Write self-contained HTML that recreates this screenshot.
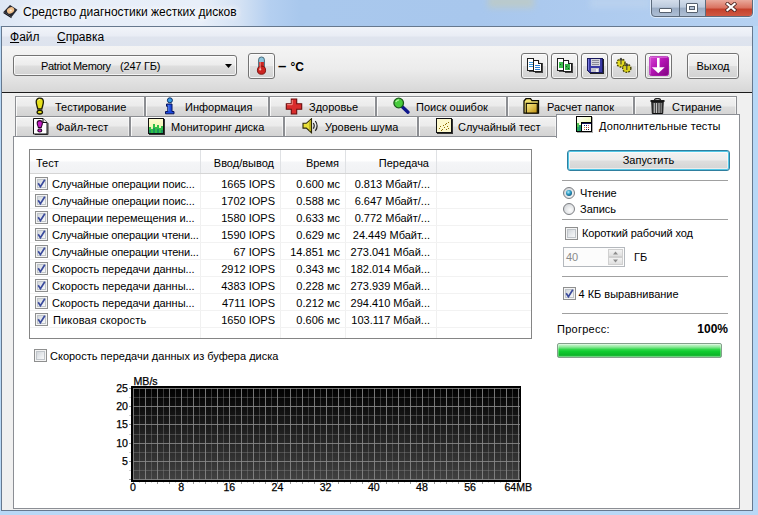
<!DOCTYPE html>
<html lang="ru"><head><meta charset="utf-8"><title>Средство диагностики жестких дисков</title>
<style>
*{box-sizing:border-box;margin:0;padding:0}
html,body{width:758px;height:515px;overflow:hidden}
body{position:relative;font-family:"Liberation Sans","DejaVu Sans",sans-serif;font-size:11px;color:#000;background:#b8d8f6}
.abs{position:absolute}
#titlebar{position:absolute;left:0;top:0;width:758px;height:26px;background:linear-gradient(90deg,#dde7f5 0,#e6edf8 40px,#e8eff9 200px,#d4e2f4 240px,#b4cff0 270px,#a9c8ed 300px,#a8c7ed 480px,#aecbef 600px,#b6d2f2 758px)}
#titlebar .blob{position:absolute;filter:blur(3px)}
#title{position:absolute;left:23px;top:4px;font-size:12px;line-height:16px;white-space:nowrap;text-shadow:0 0 6px #fff,0 0 6px #fff,0 0 9px #fff}
#client{position:absolute;left:1px;top:26px;width:752px;height:485px;border:1px solid #66788e;background:#f0f0f0}
#menubar{position:absolute;left:2px;top:27px;width:750px;height:19px;background:linear-gradient(#f1f4f9 0,#e9edf5 45%,#dfe4ee 55%,#dde3ee 100%)}
.menu{position:absolute;top:29px;font-size:12px;line-height:16px}
.menu u{text-decoration:underline}
#toolbar{position:absolute;left:2px;top:46px;width:750px;height:46px;background:linear-gradient(#f4f4f4 0,#ececec 50%,#d7d7d7 100%)}
#tbline{position:absolute;left:2px;top:92px;width:750px;height:1px;background:#1c1c1c}
.btn{position:absolute;border:1px solid #737373;border-radius:3px;background:linear-gradient(#f4f4f4 0,#ececec 48%,#dedede 52%,#d2d2d2 100%);box-shadow:inset 0 0 0 1px rgba(255,255,255,.75)}
.tab{position:absolute;height:20px;border:1px solid #8c8e92;border-bottom:none;background:linear-gradient(#f2f2f2 0,#ebebeb 48%,#dddddd 52%,#d3d3d3 100%);box-shadow:inset 1px 1px 0 rgba(255,255,255,.8),inset -1px 0 0 rgba(255,255,255,.5);white-space:nowrap;line-height:18px}
.tab span{position:absolute;top:1px}
.tab svg{position:absolute}
#pane{position:absolute;left:13px;top:136px;width:727px;height:373px;border:1px solid #8b8e94;background:#fff}
#seltab{position:absolute;left:556px;top:114px;width:184px;height:24px;border:1px solid #8b8e94;border-bottom:none;background:#fff}
#list{position:absolute;left:29px;top:149px;width:503px;height:190px;border:1px solid #858585;background:#fff;overflow:hidden}
#lhead{position:absolute;left:0;top:0;width:501px;height:24px;background:linear-gradient(#fff 0,#fff 45%,#f4f5f7 55%,#f1f2f4 100%);border-bottom:1px solid #d5d5d5}
.hc{position:absolute;top:0;height:23px;line-height:27px;border-right:1px solid #dfe1e4}
.row{position:absolute;left:0;height:17px;width:500px;line-height:19px;white-space:nowrap}
.row .ck{position:absolute;left:5px;top:2px}
.row span{position:absolute;top:0}
.c1{left:22px}.c2{right:255px}.c3{right:190px}.c4{right:100px}
.vl{position:absolute;top:24px;width:1px;height:166px;background:#f0f0f0}.hl{position:absolute;left:0;width:501px;height:1px;background:#f2f2f2}
.ck{position:absolute}
.lbl{position:absolute;white-space:nowrap;line-height:14px}
.sep{position:absolute;left:562px;width:166px;height:1px;background:#a0a0a0}
.radio{position:absolute;width:12px;height:12px;border-radius:50%;border:1px solid #7c7e82;background:radial-gradient(circle at 62% 62%,#fdfdfd 0,#e6e8ea 45%,#c4c8cc 100%)}
.yl{position:absolute;left:100px;width:28px;text-align:right;font-size:10.6px;line-height:14px;-webkit-text-stroke:.25px #000;font-family:"Liberation Sans",sans-serif}
.xl{position:absolute;top:480px;width:30px;text-align:center;font-size:10.6px;line-height:14px;white-space:nowrap;-webkit-text-stroke:.25px #000}
#chart{position:absolute;left:129px;top:386px}
</style></head><body>
<div id="titlebar">
 <div class="blob" style="left:488px;top:-4px;width:46px;height:12px;background:#c9ccb0;opacity:.55"></div>
 <div class="blob" style="left:590px;top:-2px;width:60px;height:10px;background:#bdd3ee;opacity:.8"></div>
</div>
<svg class="abs" style="left:3px;top:4px" width="15" height="15" viewBox="0 0 15 15"><path d="M.6 7.800 L7 1 L14.400 5.800 L8.600 13 Z" fill="#262830"/><path d="M.6 7.800 L8.600 13 L8.400 14.200 L.5 9.200Z" fill="#14151c"/><ellipse cx="7.600" cy="6.400" rx="3.800" ry="2.900" transform="rotate(-28 7.600 6.400)" fill="#f0c08c"/><circle cx="7.700" cy="6.500" r="1.100" fill="#fff0dc"/></svg>
<div id="title">Средство диагностики жестких дисков</div>
<!-- caption buttons -->
<div class="abs" style="left:651px;top:-1px;width:102px;height:18px;border:1px solid #5d6b7c;border-radius:0 0 4px 4px;background:linear-gradient(#d3ddeb 0,#bccadd 45%,#9aacc4 50%,#aebfd5 100%);overflow:hidden;box-shadow:0 0 0 1px rgba(255,255,255,.55)">
  <div class="abs" style="left:27px;top:0;width:1px;height:18px;background:#5d6b7c"></div>
  <div class="abs" style="left:53px;top:0;width:1px;height:18px;background:#5d6b7c"></div>
  <div class="abs" style="left:54px;top:0;width:48px;height:18px;background:linear-gradient(#e9a99c 0,#d9705e 45%,#c4402b 50%,#d2604a 100%)"></div>
  <div class="abs" style="left:7px;top:8px;width:13px;height:5px;background:#fff;border:1px solid #56606e;border-radius:1px"></div>
  <div class="abs" style="left:34px;top:3px;width:12px;height:10px;border:1px solid #56606e;background:#fff;border-radius:1px"></div>
  <div class="abs" style="left:37px;top:6px;width:6px;height:4px;border:1px solid #56606e;background:#b7c4d6"></div>
  <svg class="abs" style="left:73px;top:2px" width="12" height="10" viewBox="0 0 12 10"><path d="M2.500 2 L9.500 8 M9.500 2 L2.500 8" stroke="#4a2420" stroke-width="3.800" stroke-linecap="square"/><path d="M2.500 2 L9.500 8 M9.500 2 L2.500 8" stroke="#fff" stroke-width="2.300" stroke-linecap="square"/></svg>
</div>
<svg class="abs" width="0" height="0" style="left:0;top:0"><defs><linearGradient id="ckg" x1="0" y1="0" x2="1" y2="1"><stop offset="0" stop-color="#cfd3d7"/><stop offset=".5" stop-color="#e6e9ec"/><stop offset="1" stop-color="#fbfbfb"/></linearGradient></defs></svg>
<div id="client"></div>
<div id="menubar"></div>
<div class="menu" style="left:10px"><u>Ф</u>айл</div>
<div class="menu" style="left:57px"><u>С</u>правка</div>
<div id="toolbar"></div>
<div id="tbline"></div>

<!-- combo -->
<div class="btn" style="left:13px;top:55px;width:224px;height:21px"></div>
<div class="lbl" style="left:41px;top:59px;letter-spacing:-.35px">Patriot Memory</div><div class="lbl" style="left:120px;top:59px;letter-spacing:-.2px">(247 ГБ)</div>
<svg class="abs" style="left:225px;top:64px" width="7" height="4" viewBox="0 0 7 4"><path d="M0 0H7L3.5 4Z" fill="#000"/></svg>
<!-- thermometer -->
<div class="btn" style="left:248px;top:53px;width:27px;height:26px"></div>
<svg class="abs" style="left:255px;top:56px" width="13" height="19" viewBox="0 0 13 19"><rect x="3.600" y="1" width="5.800" height="13" rx="2.800" fill="#8cc4dc" stroke="#3c5c6c" stroke-width=".9"/><path d="M4.100 6h4.800v8h-4.800z" fill="#cc2420"/><circle cx="6.500" cy="14.200" r="4.100" fill="#cc2420" stroke="#74100c" stroke-width=".9"/><path d="M5.200 6v7" stroke="#f08c84" stroke-width="1"/><circle cx="5.200" cy="13.400" r="1.100" fill="#f8b8b0"/></svg>
<div class="lbl" style="left:278px;top:59px;font-size:15px;font-weight:bold">–</div><div class="lbl" style="left:290.5px;top:60px;font-size:12px;font-weight:bold">°C</div>
<!-- toolbar buttons -->
<div class="btn" style="left:521px;top:53px;width:27px;height:26px"></div>
<div class="btn" style="left:551px;top:53px;width:27px;height:26px"></div>
<div class="btn" style="left:581px;top:53px;width:27px;height:26px"></div>
<div class="btn" style="left:611px;top:53px;width:27px;height:26px"></div>
<div class="btn" style="left:645px;top:53px;width:27px;height:26px"></div>
<div class="btn" style="left:687px;top:53px;width:52px;height:26px"></div>
<div class="lbl" style="left:687px;top:59px;width:52px;text-align:center">Выход</div>
<!-- icons -->
<svg class="abs" style="left:527px;top:58px" width="17" height="16" viewBox="0 0 17 16" shape-rendering="crispEdges"><path d="M7 2v12M2 13h5" stroke="#555" fill="none"/><rect x=".5" y=".5" width="6" height="12" fill="#fff" stroke="#1c1c1c"/><path d="M2 4h4M2 6h4M2 8h4" stroke="#3a9ae0"/><path d="M15 5v10M8 14.500h7" stroke="#444" fill="none"/><path d="M6.500 2.500h5l3 3v8h-8z" fill="#fff" stroke="#1c1c1c"/><path d="M11.500 2.500v3h3" fill="#ddd" stroke="#1c1c1c"/><path d="M8 7.500h5M8 9.500h5M8 11.500h5" stroke="#2a82d8"/></svg>
<svg class="abs" style="left:557px;top:58px" width="17" height="16" viewBox="0 0 17 16" shape-rendering="crispEdges"><path d="M7 2v12M2 13h5" stroke="#555" fill="none"/><rect x=".5" y=".5" width="6" height="12" fill="#fff" stroke="#1c1c1c"/><rect x="2" y="4" width="4" height="6" fill="#3cc04c"/><rect x="3" y="6" width="1" height="1" fill="#0c5a1c"/><path d="M15 5v10M8 14.500h7" stroke="#444" fill="none"/><path d="M6.500 2.500h5l3 3v8h-8z" fill="#fff" stroke="#1c1c1c"/><path d="M11.500 2.500v3h3" fill="#ddd" stroke="#1c1c1c"/><rect x="8" y="6" width="5" height="6" fill="#34b044"/><rect x="9" y="8" width="1" height="1" fill="#0c5a1c"/><rect x="11" y="10" width="1" height="1" fill="#0c5a1c"/></svg>
<svg class="abs" style="left:587px;top:58px" width="17" height="16" viewBox="0 0 17 16" shape-rendering="crispEdges"><path d="M16 1v14.500H3" stroke="#222" fill="none"/><path d="M.5 .5h15v14h-13l-2-2z" fill="#3a3aa4" stroke="#18185c"/><path d="M1.500 1v11" stroke="#7878dc"/><rect x="4" y="1" width="9" height="7" fill="#d4d4dc"/><path d="M5 2.500h7M5 4.500h7M5 6.500h7" stroke="#8c8c98"/><rect x="4" y="10" width="8" height="4" fill="#c4c4cc"/><rect x="9" y="11" width="2" height="3" fill="#f4f4f8"/></svg>
<svg class="abs" style="left:615px;top:57px" width="18" height="17" viewBox="0 0 18 17"><circle cx="6" cy="6" r="3.900" fill="#e4dc20" stroke="#4a4608" stroke-width="1.800" stroke-dasharray="1.700 1.100"/><circle cx="6" cy="6" r="3.300" fill="#e4dc20"/><circle cx="11.800" cy="11.300" r="3.900" fill="#e4dc20" stroke="#4a4608" stroke-width="1.800" stroke-dasharray="1.700 1.100"/><circle cx="11.800" cy="11.300" r="3.300" fill="#d8d018"/><path d="M6 1.500v6M4.500 3.500l1.500-2 1.500 2M11.800 7v6M10.300 9l1.500-2 1.500 2" stroke="#3c3c3c" stroke-width="1.100" fill="none"/></svg>
<svg class="abs" style="left:649px;top:56px" width="20" height="20" viewBox="0 0 20 20"><defs><linearGradient id="pg" x1="0" y1="0" x2="1" y2="1"><stop offset="0" stop-color="#d848d4"/><stop offset=".45" stop-color="#b414b4"/><stop offset="1" stop-color="#800480"/></linearGradient></defs><rect x=".5" y=".5" width="19" height="19" rx="2" fill="url(#pg)" stroke="#a018a4"/><path d="M1 18.500V2.500q0-1.500 1.500-1.500h16" stroke="#f0a0f0" fill="none" stroke-opacity=".8"/><rect x="8" y="2" width="2.600" height="12" fill="#fff"/><path d="M2.800 11.300h12.900l-6.400 6z" fill="#fff"/></svg>
<!-- tabs row 1 -->
<div class="tab" style="left:15px;top:96px;width:130px"><span style="left:39px">Тестирование</span></div>
<div class="tab" style="left:145px;top:96px;width:124px"><span style="left:39px">Информация</span></div>
<div class="tab" style="left:269px;top:96px;width:107px"><span style="left:39px">Здоровье</span></div>
<div class="tab" style="left:376px;top:96px;width:131px"><span style="left:39px">Поиск ошибок</span></div>
<div class="tab" style="left:507px;top:96px;width:127px"><span style="left:39px">Расчет папок</span></div>
<div class="tab" style="left:634px;top:96px;width:103px"><span style="left:37px">Стирание</span></div>
<!-- tabs row 2 -->
<div class="tab" style="left:15px;top:116px;width:115px"><span style="left:40px">Файл-тест</span></div>
<div class="tab" style="left:130px;top:116px;width:154px"><span style="left:40px">Мониторинг диска</span></div>
<div class="tab" style="left:284px;top:116px;width:134px"><span style="left:40px">Уровень шума</span></div>
<div class="tab" style="left:418px;top:116px;width:139px"><span style="left:39px">Случайный тест</span></div>
<div id="pane"></div>
<div id="seltab"></div>
<div class="lbl" style="left:599px;top:119px;letter-spacing:.1px">Дополнительные тесты</div>

<!-- tab icons -->
<svg class="abs" style="left:35px;top:97px" width="10" height="18" viewBox="0 0 10 18"><path d="M4.800 1.200c2.400 0 3.600 1.500 3.600 3.600 0 2.400-1 4.400-1.600 7.200H2.800C2.200 9.200 1.200 7.200 1.200 4.800c0-2.100 1.200-3.600 3.600-3.600z" fill="#e6e01c" stroke="#1c1c04" stroke-width="1.300"/><path d="M3 3.600c.4-.8 1.200-1.200 2-1.100" stroke="#fbfbc0" fill="none" stroke-width="1"/><ellipse cx="4.800" cy="15.200" rx="2.700" ry="1.800" fill="#e6e01c" stroke="#1c1c04" stroke-width="1.300"/></svg>
<svg class="abs" style="left:165px;top:97px" width="10" height="18" viewBox="0 0 10 18"><circle cx="4.900" cy="3.300" r="2.500" fill="#3aa0e8" stroke="#0c2c64" stroke-width="1"/><path d="M1.500 7h5.500v7.500h2v2.300h-8.500v-2.300h2.300v-5.200h-1.300z" fill="#1c48dc" stroke="#08145c" stroke-width="1"/><path d="M3.800 8v6" stroke="#5c8cf4" stroke-width="1"/></svg>
<svg class="abs" style="left:285px;top:97.5px" width="18" height="17" viewBox="0 0 18 17"><path d="M6.300 1h5.400v4.800h5v5.400h-5v4.800h-5.400v-4.800h-5v-5.400h5z" fill="#d82c2c" stroke="#6c0c0c" stroke-width="1.100"/><path d="M7.200 2v4.700h-5" fill="none" stroke="#f4948c" stroke-width="1"/></svg>
<svg class="abs" style="left:392px;top:97px" width="18" height="17" viewBox="0 0 18 17"><path d="M10 9.500l6 5.700" stroke="#10188c" stroke-width="3.300" stroke-linecap="round"/><circle cx="6.700" cy="6" r="4.800" fill="#48cc3c" stroke="#1c5c1c" stroke-width="1.300"/><path d="M3.800 5c.6-1.400 1.800-2.200 3.200-2.200" stroke="#b4f4a4" stroke-width="1.300" fill="none"/></svg>
<svg class="abs" style="left:523px;top:98px" width="17" height="16" viewBox="0 0 17 16"><defs><linearGradient id="fg" x1="0" y1="0" x2="1" y2="1"><stop offset="0" stop-color="#fcf08c"/><stop offset="1" stop-color="#c09010"/></linearGradient></defs><path d="M1 3l2-2.300h4.500l1.500 2h6.500v12.500h-14.500z" fill="#f0e070" stroke="#0c0a00" stroke-width="1.300"/><path d="M3.300 5.300h11v9.700h-11z" fill="url(#fg)" stroke="#141000" stroke-width="1.200"/></svg>
<svg class="abs" style="left:650px;top:98px" width="15" height="16" viewBox="0 0 15 16"><path d="M.5 2h14v2h-14z" fill="#1c1c1c"/><path d="M4.500 2c0-2 6-2 6 0" fill="none" stroke="#1c1c1c" stroke-width="1.300"/><path d="M1.800 4h11.400l-.5 11.500h-10.400z" fill="#484848" stroke="#0c0c0c" stroke-width="1"/><path d="M4.300 5v10M6.500 5v10M9 5v10" stroke="#c4c4c4" stroke-width="1"/><path d="M11.300 5v10" stroke="#888" stroke-width="1"/></svg>
<!-- row2 icons -->
<svg class="abs" style="left:33px;top:118px" width="16" height="17" viewBox="0 0 16 17"><path d="M15 5v11.500H2" stroke="#333" fill="none"/><path d="M.5 .5h9.500l4 4v11.500h-13.500z" fill="#fff" stroke="#111"/><path d="M10 .5v4h4" fill="#e8e8e8" stroke="#111"/><path d="M6.800 2.600c1.700 0 2.600 1 2.600 2.500 0 1.600-.8 2.600-1.200 4.500h-2.800c-.4-1.900-1.200-2.900-1.200-4.500 0-1.500.9-2.500 2.600-2.500z" fill="#c41cc4" stroke="#2c042c" stroke-width="1.100"/><ellipse cx="6.800" cy="12.500" rx="2" ry="1.500" fill="#c41cc4" stroke="#2c042c" stroke-width="1.100"/></svg>
<svg class="abs" style="left:148px;top:118px" width="17" height="17" viewBox="0 0 17 17" shape-rendering="crispEdges"><defs><linearGradient id="mg" x1="0" y1="0" x2="0" y2="1"><stop offset="0" stop-color="#fffcd0"/><stop offset=".55" stop-color="#f4f8b8"/><stop offset="1" stop-color="#a8e0a0"/></linearGradient></defs><path d="M16 1v15.500H1" stroke="#333" fill="none"/><rect x=".5" y=".5" width="15" height="15" fill="url(#mg)" stroke="#111"/><path d="M1 15v-6h2v6zM3 15v-4h2v4zM5 15v-9h2v9zM7 15v-6h2v6zM9 15v-8h2v8zM11 15v-5h2v5zM13 15v-7h2v7z" fill="#30c048"/><path d="M1 15v-3h2v3zM5 15v-5h2v5zM9 15v-4h2v4zM13 15v-3h2v3z" fill="#148468" fill-opacity=".7"/></svg>
<svg class="abs" style="left:302px;top:118px" width="17" height="16" viewBox="0 0 17 16"><path d="M1 5.300h3.300l5.200-4.600v14l-5.200-4.600h-3.300z" fill="#e8e038" stroke="#2c2808" stroke-width="1.100"/><path d="M8 2.500v10.500" stroke="#a89c14" stroke-width="1.200"/><path d="M11.300 5c1.100 1.700 1.100 4 0 5.700M13.300 3c2.200 3 2.200 6.800 0 9.800" fill="none" stroke="#222" stroke-width="1.200"/></svg>
<svg class="abs" style="left:436px;top:118px" width="17" height="16" viewBox="0 0 17 16" shape-rendering="crispEdges"><path d="M16 1v14.500H1" stroke="#333" fill="none"/><rect x=".5" y=".5" width="15" height="14" fill="#fcf8cc" stroke="#111"/><g fill="#8c6c08"><rect x="3" y="10" width="1" height="1"/><rect x="4" y="8" width="1" height="1"/><rect x="6" y="11" width="1" height="1"/><rect x="7" y="7" width="1" height="1"/><rect x="8" y="9" width="1" height="1"/><rect x="10" y="5" width="1" height="1"/><rect x="11" y="8" width="1" height="1"/><rect x="12" y="4" width="1" height="1"/><rect x="10" y="11" width="1" height="1"/><rect x="12" y="10" width="1" height="1"/><rect x="5" y="12" width="1" height="1"/><rect x="9" y="6" width="1" height="1"/></g></svg>
<svg class="abs" style="left:576px;top:116px" width="17" height="17" viewBox="0 0 17 17" shape-rendering="crispEdges"><defs><linearGradient id="dg" x1="0" y1="0" x2="1" y2="1"><stop offset="0" stop-color="#ffffff"/><stop offset=".5" stop-color="#f4fbc8"/><stop offset="1" stop-color="#d8f0b0"/></linearGradient></defs><path d="M16.500 1v15.500H1" stroke="#777" fill="none" stroke-opacity=".6"/><rect x=".5" y=".5" width="15" height="15" fill="url(#dg)" stroke="#000"/><path d="M1 15v-8h2v8z" fill="#58c858"/><path d="M3 15v-6h2v6z" fill="#1c9470"/><path d="M1 15v-4h2v4z" fill="#2cac5c"/><rect x="5.500" y="6.500" width="10" height="9" fill="#fff" stroke="#000"/><rect x="6" y="7" width="9" height="1" fill="#14145c"/><g><rect x="8" y="9" width="1" height="1" fill="#1c1c6c"/><rect x="10" y="9" width="1" height="1" fill="#1c1c6c"/><rect x="12" y="9" width="1" height="1" fill="#d05c7c"/><rect x="8" y="11" width="1" height="1" fill="#c88c2c"/><rect x="10" y="11" width="1" height="1" fill="#8c4c2c"/><rect x="12" y="11" width="1" height="1" fill="#d03c3c"/><rect x="8" y="13" width="1" height="1" fill="#d04c3c"/><rect x="10" y="13" width="1" height="1" fill="#1c1c6c"/><rect x="12" y="13" width="1" height="1" fill="#111"/></g></svg>

<!-- list -->
<div id="list">
 <div id="lhead">
  <div class="hc" style="left:0;width:171px;padding-left:6px">Тест</div>
  <div class="hc" style="left:171px;width:80px;text-align:right;padding-right:6px">Ввод/вывод</div>
  <div class="hc" style="left:251px;width:65px;text-align:right;padding-right:6px">Время</div>
  <div class="hc" style="left:316px;width:91px;text-align:right;padding-right:7px">Передача</div>
 </div>
 <div class="vl" style="left:170px"></div><div class="vl" style="left:250px"></div><div class="vl" style="left:315px"></div><div class="vl" style="left:406px"></div>
<div class="row" style="top:25px"><svg class="ck" width="13" height="13" viewBox="0 0 13 13"><rect x=".5" y=".5" width="12" height="12" fill="#f4f4f4" stroke="#8e8f8f"/><rect x="2.5" y="2.5" width="8" height="8" fill="url(#ckg)" stroke="#c0c5ca"/><path d="M3.2 6.3 L5.4 9.6 L9.8 2.8" fill="none" stroke="#3a4a9c" stroke-width="1.7"/></svg><span class="c1" style="letter-spacing:-0.13px">Случайные операции поис...</span><span class="c2">1665 IOPS</span><span class="c3">0.600 мс</span><span class="c4">0.813 Мбайт/...</span></div><div class="hl" style="top:41px"></div>
<div class="row" style="top:42px"><svg class="ck" width="13" height="13" viewBox="0 0 13 13"><rect x=".5" y=".5" width="12" height="12" fill="#f4f4f4" stroke="#8e8f8f"/><rect x="2.5" y="2.5" width="8" height="8" fill="url(#ckg)" stroke="#c0c5ca"/><path d="M3.2 6.3 L5.4 9.6 L9.8 2.8" fill="none" stroke="#3a4a9c" stroke-width="1.7"/></svg><span class="c1" style="letter-spacing:-0.13px">Случайные операции поис...</span><span class="c2">1702 IOPS</span><span class="c3">0.588 мс</span><span class="c4">6.647 Мбайт/...</span></div><div class="hl" style="top:58px"></div>
<div class="row" style="top:59px"><svg class="ck" width="13" height="13" viewBox="0 0 13 13"><rect x=".5" y=".5" width="12" height="12" fill="#f4f4f4" stroke="#8e8f8f"/><rect x="2.5" y="2.5" width="8" height="8" fill="url(#ckg)" stroke="#c0c5ca"/><path d="M3.2 6.3 L5.4 9.6 L9.8 2.8" fill="none" stroke="#3a4a9c" stroke-width="1.7"/></svg><span class="c1" style="letter-spacing:-0.06px">Операции перемещения и...</span><span class="c2">1580 IOPS</span><span class="c3">0.633 мс</span><span class="c4">0.772 Мбайт/...</span></div><div class="hl" style="top:75px"></div>
<div class="row" style="top:76px"><svg class="ck" width="13" height="13" viewBox="0 0 13 13"><rect x=".5" y=".5" width="12" height="12" fill="#f4f4f4" stroke="#8e8f8f"/><rect x="2.5" y="2.5" width="8" height="8" fill="url(#ckg)" stroke="#c0c5ca"/><path d="M3.2 6.3 L5.4 9.6 L9.8 2.8" fill="none" stroke="#3a4a9c" stroke-width="1.7"/></svg><span class="c1" style="letter-spacing:-0.17px">Случайные операции чтени...</span><span class="c2">1590 IOPS</span><span class="c3">0.629 мс</span><span class="c4">24.449 Мбайт...</span></div><div class="hl" style="top:92px"></div>
<div class="row" style="top:93px"><svg class="ck" width="13" height="13" viewBox="0 0 13 13"><rect x=".5" y=".5" width="12" height="12" fill="#f4f4f4" stroke="#8e8f8f"/><rect x="2.5" y="2.5" width="8" height="8" fill="url(#ckg)" stroke="#c0c5ca"/><path d="M3.2 6.3 L5.4 9.6 L9.8 2.8" fill="none" stroke="#3a4a9c" stroke-width="1.7"/></svg><span class="c1" style="letter-spacing:-0.17px">Случайные операции чтени...</span><span class="c2">67 IOPS</span><span class="c3">14.851 мс</span><span class="c4">273.041 Мбай...</span></div><div class="hl" style="top:109px"></div>
<div class="row" style="top:110px"><svg class="ck" width="13" height="13" viewBox="0 0 13 13"><rect x=".5" y=".5" width="12" height="12" fill="#f4f4f4" stroke="#8e8f8f"/><rect x="2.5" y="2.5" width="8" height="8" fill="url(#ckg)" stroke="#c0c5ca"/><path d="M3.2 6.3 L5.4 9.6 L9.8 2.8" fill="none" stroke="#3a4a9c" stroke-width="1.7"/></svg><span class="c1" style="letter-spacing:-0.04px">Скорость передачи данны...</span><span class="c2">2912 IOPS</span><span class="c3">0.343 мс</span><span class="c4">182.014 Мбай...</span></div><div class="hl" style="top:126px"></div>
<div class="row" style="top:127px"><svg class="ck" width="13" height="13" viewBox="0 0 13 13"><rect x=".5" y=".5" width="12" height="12" fill="#f4f4f4" stroke="#8e8f8f"/><rect x="2.5" y="2.5" width="8" height="8" fill="url(#ckg)" stroke="#c0c5ca"/><path d="M3.2 6.3 L5.4 9.6 L9.8 2.8" fill="none" stroke="#3a4a9c" stroke-width="1.7"/></svg><span class="c1" style="letter-spacing:-0.04px">Скорость передачи данны...</span><span class="c2">4383 IOPS</span><span class="c3">0.228 мс</span><span class="c4">273.939 Мбай...</span></div><div class="hl" style="top:143px"></div>
<div class="row" style="top:144px"><svg class="ck" width="13" height="13" viewBox="0 0 13 13"><rect x=".5" y=".5" width="12" height="12" fill="#f4f4f4" stroke="#8e8f8f"/><rect x="2.5" y="2.5" width="8" height="8" fill="url(#ckg)" stroke="#c0c5ca"/><path d="M3.2 6.3 L5.4 9.6 L9.8 2.8" fill="none" stroke="#3a4a9c" stroke-width="1.7"/></svg><span class="c1" style="letter-spacing:-0.04px">Скорость передачи данны...</span><span class="c2">4711 IOPS</span><span class="c3">0.212 мс</span><span class="c4">294.410 Мбай...</span></div><div class="hl" style="top:160px"></div>
<div class="row" style="top:161px"><svg class="ck" width="13" height="13" viewBox="0 0 13 13"><rect x=".5" y=".5" width="12" height="12" fill="#f4f4f4" stroke="#8e8f8f"/><rect x="2.5" y="2.5" width="8" height="8" fill="url(#ckg)" stroke="#c0c5ca"/><path d="M3.2 6.3 L5.4 9.6 L9.8 2.8" fill="none" stroke="#3a4a9c" stroke-width="1.7"/></svg><span class="c1" style="letter-spacing:0.14px;left:23px">Пиковая скорость</span><span class="c2">1650 IOPS</span><span class="c3">0.606 мс</span><span class="c4">103.117 Мбай...</span></div><div class="hl" style="top:177px"></div>

</div>
<div class="abs" style="left:34px;top:349px;width:13px;height:13px"><svg class="ck" width="13" height="13" viewBox="0 0 13 13"><rect x=".5" y=".5" width="12" height="12" fill="#f4f4f4" stroke="#8e8f8f"/><rect x="2.5" y="2.5" width="8" height="8" fill="url(#ckg)" stroke="#c0c5ca"/></svg></div>
<div class="lbl" style="left:50px;top:349px">Скорость передачи данных из буфера диска</div>

<!-- right panel -->
<div class="abs" style="left:567px;top:150px;width:163px;height:21px;border:1px solid #2f7f9f;border-radius:3px;background:linear-gradient(#f3f3f3 0,#ececec 48%,#dedede 52%,#d3d3d3 100%);box-shadow:inset 0 0 0 1px #52c6e6,inset 0 0 0 2px rgba(255,255,255,.55)"></div>
<div class="lbl" style="left:567px;top:153px;width:163px;text-align:center">Запустить</div>
<div class="sep" style="top:180px"></div>
<div class="radio" style="left:563px;top:187px"></div><div class="abs" style="left:566px;top:190px;width:6px;height:6px;border-radius:50%;background:radial-gradient(circle at 40% 35%,#b8ecfa 0,#2c9cc4 40%,#0c4870 85%)"></div>
<div class="lbl" style="left:580px;top:186px">Чтение</div>
<div class="radio" style="left:563px;top:203px"></div>
<div class="lbl" style="left:580px;top:202px">Запись</div>
<div class="sep" style="top:219px"></div>
<div class="abs" style="left:565px;top:227px;width:13px;height:13px"><svg class="ck" width="13" height="13" viewBox="0 0 13 13"><rect x=".5" y=".5" width="12" height="12" fill="#f4f4f4" stroke="#8e8f8f"/><rect x="2.5" y="2.5" width="8" height="8" fill="url(#ckg)" stroke="#c0c5ca"/></svg></div>
<div class="lbl" style="left:582px;top:226px;letter-spacing:-.1px">Короткий рабочий ход</div>
<div class="abs" style="left:563px;top:247px;width:62px;height:20px;border:1px solid #b4b8bd;background:#fcfcfc"></div>
<div class="lbl" style="left:566px;top:250px;color:#8a8a8a">40</div>
<svg class="abs" style="left:608px;top:249px" width="15" height="16" viewBox="0 0 15 16"><defs><linearGradient id="sg" x1="0" y1="0" x2="0" y2="1"><stop offset="0" stop-color="#f4f4f4"/><stop offset="1" stop-color="#dedede"/></linearGradient></defs><rect x=".5" y=".5" width="14" height="7" fill="url(#sg)" stroke="#d0d0d0"/><rect x=".5" y="8.500" width="14" height="7" fill="url(#sg)" stroke="#d0d0d0"/><path d="M5 5.500h5l-2.500-3z" fill="#8c8c8c"/><path d="M5 10.500h5l-2.500 3z" fill="#8c8c8c"/></svg>
<div class="lbl" style="left:634px;top:250px">ГБ</div>
<div class="sep" style="top:276px"></div>
<div class="abs" style="left:563px;top:287px;width:13px;height:13px"><svg class="ck" width="13" height="13" viewBox="0 0 13 13"><rect x=".5" y=".5" width="12" height="12" fill="#f4f4f4" stroke="#8e8f8f"/><rect x="2.5" y="2.5" width="8" height="8" fill="url(#ckg)" stroke="#c0c5ca"/><path d="M3.2 6.3 L5.4 9.6 L9.8 2.8" fill="none" stroke="#3a4a9c" stroke-width="1.7"/></svg></div>
<div class="lbl" style="left:578.5px;top:287px">4 КБ выравнивание</div>
<div class="sep" style="top:313px"></div>
<div class="lbl" style="left:557px;top:322px;letter-spacing:.25px">Прогресс:</div>
<div class="lbl" style="left:660px;top:322px;width:68px;text-align:right;font-weight:bold;font-size:12px">100%</div>
<div class="abs" style="left:557px;top:343px;width:165px;height:15px;border:1px solid #84a08c;border-radius:2px;background:linear-gradient(#d2f6d6 0,#90ea9c 22%,#2ed648 42%,#10cc30 58%,#0eb62a 84%,#34c24c 100%);box-shadow:inset 0 0 0 1px rgba(255,255,255,.3)"></div>

<!-- chart -->
<svg id="chart" width="394" height="98" viewBox="-2 0 394 98" shape-rendering="crispEdges">
<defs><linearGradient id="cg" x1="0" y1="0" x2="0" y2="1"><stop offset="0" stop-color="#000"/><stop offset="1" stop-color="#424242"/></linearGradient></defs>
<rect x="0" y="0" width="390" height="95.5" fill="url(#cg)"/>
<g stroke="#8a8a8a" stroke-width="1" stroke-opacity=".85"><line x1="2.50" y1="0" x2="2.50" y2="97.5"/><line x1="8.52" y1="0" x2="8.52" y2="96.8" stroke-opacity=".38"/><line x1="14.54" y1="0" x2="14.54" y2="97.5"/><line x1="20.56" y1="0" x2="20.56" y2="96.8" stroke-opacity=".38"/><line x1="26.58" y1="0" x2="26.58" y2="97.5"/><line x1="32.60" y1="0" x2="32.60" y2="96.8" stroke-opacity=".38"/><line x1="38.62" y1="0" x2="38.62" y2="97.5"/><line x1="44.64" y1="0" x2="44.64" y2="96.8" stroke-opacity=".38"/><line x1="50.66" y1="0" x2="50.66" y2="97.5"/><line x1="56.68" y1="0" x2="56.68" y2="96.8" stroke-opacity=".38"/><line x1="62.70" y1="0" x2="62.70" y2="97.5"/><line x1="68.72" y1="0" x2="68.72" y2="96.8" stroke-opacity=".38"/><line x1="74.74" y1="0" x2="74.74" y2="97.5"/><line x1="80.76" y1="0" x2="80.76" y2="96.8" stroke-opacity=".38"/><line x1="86.78" y1="0" x2="86.78" y2="97.5"/><line x1="92.80" y1="0" x2="92.80" y2="96.8" stroke-opacity=".38"/><line x1="98.82" y1="0" x2="98.82" y2="97.5"/><line x1="104.84" y1="0" x2="104.84" y2="96.8" stroke-opacity=".38"/><line x1="110.86" y1="0" x2="110.86" y2="97.5"/><line x1="116.88" y1="0" x2="116.88" y2="96.8" stroke-opacity=".38"/><line x1="122.90" y1="0" x2="122.90" y2="97.5"/><line x1="128.92" y1="0" x2="128.92" y2="96.8" stroke-opacity=".38"/><line x1="134.94" y1="0" x2="134.94" y2="97.5"/><line x1="140.96" y1="0" x2="140.96" y2="96.8" stroke-opacity=".38"/><line x1="146.98" y1="0" x2="146.98" y2="97.5"/><line x1="153.00" y1="0" x2="153.00" y2="96.8" stroke-opacity=".38"/><line x1="159.02" y1="0" x2="159.02" y2="97.5"/><line x1="165.04" y1="0" x2="165.04" y2="96.8" stroke-opacity=".38"/><line x1="171.06" y1="0" x2="171.06" y2="97.5"/><line x1="177.08" y1="0" x2="177.08" y2="96.8" stroke-opacity=".38"/><line x1="183.10" y1="0" x2="183.10" y2="97.5"/><line x1="189.12" y1="0" x2="189.12" y2="96.8" stroke-opacity=".38"/><line x1="195.14" y1="0" x2="195.14" y2="97.5"/><line x1="201.16" y1="0" x2="201.16" y2="96.8" stroke-opacity=".38"/><line x1="207.18" y1="0" x2="207.18" y2="97.5"/><line x1="213.20" y1="0" x2="213.20" y2="96.8" stroke-opacity=".38"/><line x1="219.22" y1="0" x2="219.22" y2="97.5"/><line x1="225.24" y1="0" x2="225.24" y2="96.8" stroke-opacity=".38"/><line x1="231.26" y1="0" x2="231.26" y2="97.5"/><line x1="237.28" y1="0" x2="237.28" y2="96.8" stroke-opacity=".38"/><line x1="243.30" y1="0" x2="243.30" y2="97.5"/><line x1="249.32" y1="0" x2="249.32" y2="96.8" stroke-opacity=".38"/><line x1="255.34" y1="0" x2="255.34" y2="97.5"/><line x1="261.36" y1="0" x2="261.36" y2="96.8" stroke-opacity=".38"/><line x1="267.38" y1="0" x2="267.38" y2="97.5"/><line x1="273.40" y1="0" x2="273.40" y2="96.8" stroke-opacity=".38"/><line x1="279.42" y1="0" x2="279.42" y2="97.5"/><line x1="285.44" y1="0" x2="285.44" y2="96.8" stroke-opacity=".38"/><line x1="291.46" y1="0" x2="291.46" y2="97.5"/><line x1="297.48" y1="0" x2="297.48" y2="96.8" stroke-opacity=".38"/><line x1="303.50" y1="0" x2="303.50" y2="97.5"/><line x1="309.52" y1="0" x2="309.52" y2="96.8" stroke-opacity=".38"/><line x1="315.54" y1="0" x2="315.54" y2="97.5"/><line x1="321.56" y1="0" x2="321.56" y2="96.8" stroke-opacity=".38"/><line x1="327.58" y1="0" x2="327.58" y2="97.5"/><line x1="333.60" y1="0" x2="333.60" y2="96.8" stroke-opacity=".38"/><line x1="339.62" y1="0" x2="339.62" y2="97.5"/><line x1="345.64" y1="0" x2="345.64" y2="96.8" stroke-opacity=".38"/><line x1="351.66" y1="0" x2="351.66" y2="97.5"/><line x1="357.68" y1="0" x2="357.68" y2="96.8" stroke-opacity=".38"/><line x1="363.70" y1="0" x2="363.70" y2="97.5"/><line x1="369.72" y1="0" x2="369.72" y2="96.8" stroke-opacity=".38"/><line x1="375.74" y1="0" x2="375.74" y2="97.5"/><line x1="381.76" y1="0" x2="381.76" y2="96.8" stroke-opacity=".38"/><line x1="387.78" y1="0" x2="387.78" y2="97.5"/></g>
<g stroke="#8a8a8a" stroke-width="1" stroke-opacity=".85"><line x1="-2" y1="93.50" x2="390" y2="93.50"/><line x1="-2" y1="84.40" x2="390" y2="84.40" stroke-opacity=".38"/><line x1="-2" y1="75.30" x2="390" y2="75.30"/><line x1="-2" y1="66.20" x2="390" y2="66.20" stroke-opacity=".38"/><line x1="-2" y1="57.10" x2="390" y2="57.10"/><line x1="-2" y1="48.00" x2="390" y2="48.00" stroke-opacity=".38"/><line x1="-2" y1="38.90" x2="390" y2="38.90"/><line x1="-2" y1="29.80" x2="390" y2="29.80" stroke-opacity=".38"/><line x1="-2" y1="20.70" x2="390" y2="20.70"/><line x1="-2" y1="11.60" x2="390" y2="11.60" stroke-opacity=".38"/><line x1="-2" y1="2.50" x2="390" y2="2.50"/></g>
<rect x="0" y="0" width="390" height="2" fill="#000"/><rect x="0" y="0" width="2" height="95.5" fill="#000"/><rect x="388.5" y="0" width="1.5" height="95.5" fill="#000"/><rect x="0" y="93.5" width="390" height="2" fill="#000"/>
</svg>
<div class="lbl" style="left:133.5px;top:374px;font-size:10.6px;-webkit-text-stroke:.25px #000">MB/s</div>
<div class="yl" style="top:381.0px">25</div><div class="yl" style="top:399.2px">20</div><div class="yl" style="top:417.4px">15</div><div class="yl" style="top:435.6px">10</div><div class="yl" style="top:453.8px">5</div>
<div class="xl" style="left:118.0px">0</div><div class="xl" style="left:166.2px">8</div><div class="xl" style="left:214.3px">16</div><div class="xl" style="left:262.5px">24</div><div class="xl" style="left:310.6px">32</div><div class="xl" style="left:358.8px">40</div><div class="xl" style="left:407.0px">48</div><div class="xl" style="left:455.1px">56</div><div class="xl" style="left:503.3px">64MB</div>
</body></html>
